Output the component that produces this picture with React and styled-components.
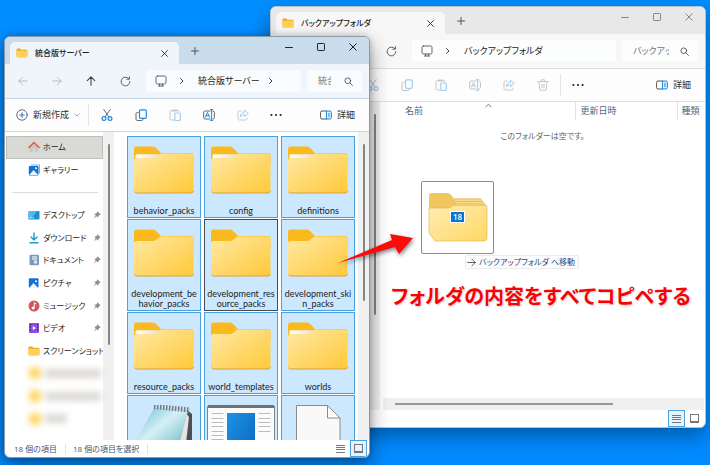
import React from "react";
import styled, { createGlobalStyle } from "styled-components";

const GlobalStyle = createGlobalStyle`
  * { box-sizing: border-box; }
  body {
    margin: 0;
    font-family: "Open Sans", "Noto Sans CJK JP", sans-serif;
    font-size: 9px;
    line-height: 12px;
    color: #222;
    font-feature-settings: "palt";
  }
  button, input {
    font: inherit;
    font-feature-settings: inherit;
    color: inherit;
    border: 0;
    padding: 0;
    background: none;
  }
  a { color: inherit; text-decoration: none; }
  svg { display: block; flex: none; }
`;

const Desktop = styled.main`
  position: relative;
  height: 100vh;
  min-height: 400px;
  overflow: hidden;
  background: linear-gradient(#008eff, #008aff);
`;

const Window = styled.section`
  position: absolute;
  inset: ${(p) => (p.$front ? "36px 340px 7px 4px" : "6px 4px 37px 270px")};
  display: flex;
  flex-direction: column;
  overflow: hidden;
  border: 1px solid ${(p) => (p.$front ? "#8a9aa8" : "#b4c2cc")};
  border-radius: 6px;
  background: #fff;
  box-shadow: ${(p) =>
    p.$front
      ? "0 8px 20px rgba(0, 0, 0, 0.4), 0 0 6px rgba(0, 0, 0, 0.2)"
      : "0 8px 20px rgba(0, 0, 0, 0.35)"};
`;

const TitleBar = styled.header`
  display: flex;
  flex: none;
  height: 27px;
  padding-left: 5px;
  background: ${(p) => (p.$front ? "#c9dcec" : "#e8e8e8")};
`;

const Tab = styled.div`
  display: flex;
  align-items: center;
  gap: 7px;
  width: 169px;
  margin-top: 5px;
  padding: 0 8px 0 6px;
  border-radius: 5px 5px 0 0;
  background: ${(p) => (p.$front ? "#eff5fb" : "#f7f7f7")};
`;

const TabTitle = styled.h1`
  flex: 1;
  margin: 0;
  font-size: 8px;
  font-weight: 500;
  white-space: nowrap;
`;

const IconButton = styled.button`
  display: flex;
  align-items: center;
  justify-content: center;
  flex: none;
  width: ${(p) => p.$width || 34}px;
  opacity: ${(p) => (p.$faded ? 0.4 : 1)};
`;

const Captions = styled.div`
  display: flex;
  height: 20px;
  margin-left: auto;
  color: ${(p) => (p.$front ? "#222" : "#888")};
`;

const NavBar = styled.nav`
  display: flex;
  flex: none;
  height: 35px;
  padding: 6px 7px 6px 1px;
  border-bottom: 1px solid ${(p) => (p.$front ? "#c3d5e4" : "#dedede")};
  background: ${(p) => (p.$front ? "#eff5fb" : "#f7f7f7")};
`;

const Address = styled.div`
  display: flex;
  align-items: center;
  flex: 1;
  min-width: 0;
  margin: 0 6px 0 4px;
  padding-left: 9px;
  border-radius: 3px;
  background: ${(p) => (p.$front ? "#f9fcfe" : "#fcfdfd")};
`;

const Crumb = styled.button`
  margin: 0 7px 0 1px;
  white-space: nowrap;
`;

const Search = styled.label`
  display: flex;
  align-items: center;
  justify-content: space-between;
  width: ${(p) => (p.$front ? "55px" : "76px")};
  padding: 0 9px 0 11px;
  border-radius: 3px;
  background: ${(p) => (p.$front ? "#f9fcfe" : "#fcfdfd")};

  input {
    width: ${(p) => (p.$front ? "13px" : "36px")};
    outline: 0;
  }
  input::placeholder { color: #777; opacity: 1; }
`;

const ToolBar = styled.div`
  display: flex;
  align-items: stretch;
  flex: none;
  height: 33px;
  border-bottom: 1px solid ${(p) => (p.$front ? "#ccd8e2" : "#e0e0e0")};
  background: #fdfdfe;
  color: #333;
`;

const NewButton = styled.button`
  display: flex;
  align-items: center;
  gap: 5px;
  width: 83px;
  padding-left: 11px;
  white-space: nowrap;
`;

const Divider = styled.span`
  width: 1px;
  margin: 5px 1px 5px 0;
  background: #e6e6e6;
`;

const DetailsButton = styled.button`
  display: flex;
  align-items: center;
  gap: 5px;
  margin-left: auto;
  padding-right: 14px;
`;

const Body = styled.div`
  display: flex;
  flex: 1;
  min-height: 0;
`;

const Sidebar = styled.ul`
  display: grid;
  grid-auto-rows: 1fr;
  width: 98px;
  margin: 0;
  padding: 4px 0 10px 1px;
  list-style: none;
  flex: none;
`;

const SideItem = styled.li`
  display: flex;
  align-items: center;
  min-width: 0;

  hr {
    flex: 1;
    margin: 0 5px 0 6px;
    border: 0;
    border-top: 1px solid #dcdcdc;
  }
`;

const SideLink = styled.a`
  display: flex;
  align-items: center;
  flex: 1;
  gap: 3px;
  height: 100%;
  padding: 0 1px 0 21px;
  border: 1px solid ${(p) => (p.$current ? "#bdbdba" : "transparent")};
  background: ${(p) => (p.$current ? "#d9d9d6" : "transparent")};
  font-size: 8px;
  white-space: nowrap;

  svg:nth-of-type(2) { margin-left: auto; }
`;

const Smudge = styled.span`
  display: flex;
  align-items: center;
  gap: 4px;
  padding-left: 23px;
  filter: blur(3px);

  &::before {
    content: "";
    width: 12px;
    height: 12px;
    border-radius: 3px;
    background: #fcd96f;
  }
  &::after {
    content: "";
    width: ${(p) => p.$width}px;
    height: 9px;
    background: #dcd9d6;
  }
`;

const Track = styled.div`
  flex: none;
  width: 11px;
  padding: 12px 4px 0 5px;
  background: #f0f0f0;
`;

const Thumb = styled.div`
  height: ${(p) => p.$length};
  border-radius: 1px;
  background: #868686;
`;

const FileGrid = styled.div`
  display: grid;
  grid-template-columns: repeat(auto-fill, 74px);
  align-content: start;
  gap: 1px 3px;
  flex: 1;
  min-width: 0;
  overflow: hidden;
  padding: 4px 2px 0 13px;
`;

const Tile = styled.button`
  display: flex;
  flex-direction: column;
  align-items: center;
  justify-content: flex-start;
  gap: 12px;
  padding: 9px 0 1px;
  border: 1px solid ${(p) => (p.$focused ? "#444b52" : "#4ba0e0")};
  background: #cce8ff;
  font-family: Lato, "Open Sans", sans-serif;
  line-height: 10px;
`;

const TileLabel = styled.span`
  display: flex;
  flex-direction: column;
  align-items: center;
`;

const Status = styled.footer`
  display: flex;
  align-items: center;
  flex: none;
  height: 17px;
  padding: 0 2px 0 9px;
  color: #45556b;
  font-size: 8px;
  line-height: 10px;

  span { padding-right: 8px; }
  span + span {
    padding-left: 7px;
    border-left: 1px solid #e3e3e3;
    border-right: 1px solid #e3e3e3;
  }
`;

const ViewButtons = styled.div`
  display: flex;
  align-self: stretch;
  margin-left: auto;
`;

const ViewButton = styled.button`
  display: flex;
  align-items: center;
  justify-content: center;
  width: 17px;
  margin-left: 1px;
  border: 1px solid ${(p) => (p.$active ? "#4ba0e0" : "transparent")};
  background: ${(p) => (p.$active ? "#e5f3fc" : "none")};
  color: #777;
`;

const Pane = styled.div`
  display: flex;
  flex-direction: column;
  flex: 1;
  min-width: 0;
`;

const FileTable = styled.table`
  width: 100%;
  table-layout: fixed;
  border-collapse: collapse;

  th {
    height: 18px;
    padding: 0 0 0 5px;
    border-right: 1px solid #e2e2e2;
    color: #56697c;
    font-weight: 400;
    text-align: left;
    white-space: nowrap;
  }
  th:first-child { width: 195px; padding-left: 25px; }
  th:nth-child(2) { width: 102px; }
  th:last-child { border-right: 0; padding-left: 4px; }
  td {
    padding: 10px 0 0;
    color: #666;
    font-size: 8px;
    text-align: center;
  }
`;

const SortHead = styled.span`
  display: flex;
  justify-content: space-between;
  padding-right: 83px;

  svg { margin-top: -3px; }
`;

const BottomTrack = styled.div`
  height: 12px;
  margin: auto 1px 0 3px;
  padding: 5px 91px 0 12px;
  background: #f0f0f0;
`;

const BottomThumb = styled.div`
  height: 2px;
  background: #959a98;
`;

const DragGhost = styled.div`
  position: absolute;
  top: 181px;
  left: 421px;
  display: flex;
  align-items: center;
  justify-content: center;
  width: 73px;
  height: 73px;
  border: 1px solid #8c8c8c;
  border-radius: 2px;
  background: #fff;
`;

const Count = styled.span`
  position: absolute;
  top: 29px;
  left: 28px;
  width: 15px;
  border: 1px solid #fff;
  background: #0a74cf;
  color: #fff;
  font-size: 8px;
  font-weight: 600;
  line-height: 10px;
  text-align: center;
`;

const DropHint = styled.div`
  position: absolute;
  top: 255px;
  left: 465px;
  display: flex;
  align-items: center;
  gap: 3px;
  height: 14px;
  padding: 0 3px 0 1px;
  border: 1px solid #ececec;
  border-radius: 2px;
  background: #fbfbfb;
  color: #2b4a80;
  font-size: 8px;
  white-space: nowrap;
`;

const Note = styled.p`
  position: absolute;
  top: 283px;
  left: 391px;
  margin: 0;
  color: #fb0007;
  font-size: 20px;
  font-weight: 700;
  line-height: 28px;
  white-space: nowrap;
  text-shadow: 1px 1px 2px rgba(0, 0, 0, 0.2);
`;

const Pointer = styled.svg`
  position: absolute;
  top: 230px;
  left: 334px;
  filter: drop-shadow(1px 2px 2px rgba(0, 0, 0, 0.5));
`;

/* ---------- icons ---------- */

const Line = ({ size = 12, box = 12, w = 1, color = "currentColor", children }) => (
  <svg width={size} height={size} viewBox={`0 0 ${box} ${box}`} fill="none" stroke={color}
    strokeWidth={w} strokeLinecap="round" strokeLinejoin="round" aria-hidden="true">
    {children}
  </svg>
);

const BackIcon = () => <Line size={10} color="#aab0b6"><path d="M11 6H1M5.500 1.500 1 6l4.500 4.500" /></Line>;
const NextIcon = () => <Line size={10} color="#aab0b6"><path d="M1 6h10M6.500 1.500 11 6l-4.500 4.500" /></Line>;
const UpIcon = () => <Line size={10} color="#444" w={1.3}><path d="M6 11V1M1.500 5.500 6 1l4.500 4.500" /></Line>;
const ReloadIcon = () => <Line size={11} color="#555"><path d="M10.800 6A4.800 4.800 0 1 1 9.500 2.700M10.300.8v2.700H7.500" /></Line>;
const MonitorIcon = () => (
  <Line color="#666"><rect x="1" y="1" width="10" height="8" rx="1.500" /><path d="M4.500 9v2M7.500 9v2M3.500 11h5" /></Line>
);
const Chevron = () => <Line size={8} box={8} color="#444"><path d="m2.500 1.500 2.500 2.500-2.500 2.500" /></Line>;
const ChevronDown = () => <Line size={6} box={8} color="#888"><path d="m1 2.500 3 3 3-3" /></Line>;
const ChevronUp = () => <Line size={7} box={8} color="#666"><path d="m1 5.500 3-3 3 3" /></Line>;
const SearchIcon = () => <Line size={9} color="#555" w={1.2}><circle cx="5" cy="5" r="3.800" /><path d="m8 8 3.300 3.300" /></Line>;
const CloseIcon = ({ size = 8 }) => <Line size={size} box={8}><path d="m.7.7 6.600 6.600M7.300.7.7 7.300" /></Line>;
const MinIcon = () => <Line size={8} box={8}><path d="M.5 4.500h7" /></Line>;
const MaxIcon = () => <Line size={8} box={8}><rect x=".5" y=".5" width="7" height="7" rx=".7" /></Line>;
const PlusIcon = () => <Line size={8} box={8} color="#555"><path d="M4 .5v7M.5 4h7" /></Line>;
const NewIcon = () => (
  <Line size={12}><circle cx="6" cy="6" r="5.200" stroke="#667" /><path d="M6 3.800v4.400M3.800 6h4.400" stroke="#1e88e0" strokeWidth="1.200" /></Line>
);
const CutIcon = () => (
  <Line>
    <path d="M2.800.6 8 8M9.200.6 4 8" stroke="#666" />
    <circle cx="3" cy="9.500" r="1.900" stroke="#1e88e0" strokeWidth="1.200" />
    <circle cx="9" cy="9.500" r="1.900" stroke="#1e88e0" strokeWidth="1.200" />
  </Line>
);
const CopyIcon = () => (
  <Line>
    <path d="M3.200 3.500H2.300A1.300 1.300 0 0 0 1 4.800v5.400a1.300 1.300 0 0 0 1.300 1.300h4.400A1.300 1.300 0 0 0 8 10.200v-.4" stroke="#666" />
    <rect x="4.500" y=".8" width="6.800" height="8.500" rx="1.300" stroke="#1e88e0" strokeWidth="1.200" />
  </Line>
);
const PasteIcon = () => (
  <Line>
    <path d="M5 11H2.300A1.300 1.300 0 0 1 1 9.700V2.800a1.300 1.300 0 0 1 1.300-1.300h6.400A1.300 1.300 0 0 1 10 2.800" stroke="#777" />
    <path d="M3.500 1.500h4" stroke="#777" strokeWidth="1.800" />
    <rect x="5.800" y="4" width="5.500" height="7.500" rx="1" stroke="#1e88e0" strokeWidth="1.200" />
  </Line>
);
const RenameIcon = () => (
  <Line>
    <path d="M7 2H2.200A1.500 1.500 0 0 0 .7 3.500v5A1.500 1.500 0 0 0 2.200 10H7M10 2a1.500 1.500 0 0 1 1.400 1.500v5A1.500 1.500 0 0 1 10 10" stroke="#666" />
    <path d="M2.500 8 4.500 3.500 6.500 8M3.200 6.700h2.600M8.600.8v10.400M7.500.6h2.200M7.500 11.400h2.200" stroke="#1e88e0" />
  </Line>
);
const ShareIcon = () => (
  <Line>
    <path d="M4 2H2.300A1.300 1.300 0 0 0 1 3.300v6.400A1.300 1.300 0 0 0 2.300 11h6.400A1.300 1.300 0 0 0 10 9.700V9" stroke="#777" />
    <path d="M7.500 1.200 11.300 4.400 7.500 7.500V5.700C5.500 5.700 4.200 6.300 3.300 8 3.500 5.200 5 3.200 7.500 3z" stroke="#1e88e0" />
  </Line>
);
const TrashIcon = () => (
  <Line color="#777"><path d="M.8 2.500h10.400M4.500 2.500V.8h3v1.700M2 2.500l.7 7.700a1.200 1.200 0 0 0 1.200 1.100h4.200a1.200 1.200 0 0 0 1.200-1.100l.7-7.700M5 5v4M7 5v4" /></Line>
);
const DotsIcon = () => (
  <svg width="12" height="4" viewBox="0 0 12 4" fill="#222"><circle cx="1.400" cy="2" r="1.100" /><circle cx="6" cy="2" r="1.100" /><circle cx="10.600" cy="2" r="1.100" /></svg>
);
const DetailsIcon = () => (
  <Line>
    <path d="M6.500 2H2A1.400 1.400 0 0 0 .6 3.400v5.200A1.400 1.400 0 0 0 2 10h4.500" stroke="#555" />
    <path d="M6.800 2H10a1.400 1.400 0 0 1 1.400 1.400v5.200A1.400 1.400 0 0 1 10 10H6.800zM9 4.500v3" stroke="#1e88e0" fill="#d7ecfb" />
  </Line>
);
const RowsIcon = () => <svg width="9" height="9" viewBox="0 0 9 9" stroke="currentColor"><path d="M0 1.500h9M0 3.500h9M0 5.500h9M0 8.500h9" /></svg>;
const LargeIcon = () => (
  <svg width="9" height="9" viewBox="0 0 9 9" fill="none" stroke="currentColor"><rect x=".5" y=".5" width="8" height="7" /><path d="M0 8.500h9" /></svg>
);
const PinIcon = () => (
  <svg width="8" height="8" viewBox="0 0 8 8"><path d="M4.500.3 7.700 3.500 6.500 4 5.300 5.200 5.200 6.700 3.500 5.300.5 7.800 2.700 4.500 1.300 2.800 2.900 2.600 4 1.500z" fill="#8c9094" /></svg>
);

const SmallFolder = () => (
  <svg width="12" height="12" viewBox="0 0 12 12">
    <path d="M.5 2.500a1 1 0 0 1 1-1h2.600l1.300 1.300h5a1 1 0 0 1 1 1V9H.5z" fill="#eda91c" />
    <rect x=".5" y="3.800" width="11" height="7" rx="1" fill="#ffd158" />
  </svg>
);
const HomeIcon = () => (
  <svg width="12" height="12" viewBox="0 0 12 12">
    <path d="M2 5.500 6 2l4 3.500V11H7.300V7.500H4.700V11H2z" fill="#c3c7ca" />
    <path d="M1 6.300 6 1.500l5 4.800" fill="none" stroke="#e8643c" strokeWidth="1.700" strokeLinecap="round" strokeLinejoin="round" />
  </svg>
);
const PictureIcon = ({ stacked }) => (
  <svg width="12" height="12" viewBox="0 0 12 12">
    {stacked && <path d="M3 1h8.500v8.500" fill="none" stroke="#64b4f0" strokeWidth="1" />}
    <rect x=".8" y={stacked ? 2 : 1.2} width="9.700" height="9.500" rx="1" fill="#1272d0" />
    <path d="M1.200 11 5.600 6l4.600 5z" fill="#e6f5ff" />
    <circle cx="8" cy="4.200" r="1" fill="#fff" />
  </svg>
);
const DesktopIcon = () => (
  <svg width="12" height="12" viewBox="0 0 12 12">
    <rect x=".5" y="2" width="11" height="8.500" rx="1" fill="#1e8fd5" />
    <path d="M.5 3a1 1 0 0 1 1-1H9L2.500 10.500h-1a1 1 0 0 1-1-1z" fill="#55b9ec" />
    <path d="M2 8.800h1.500M4.500 8.800H6" stroke="#fff" />
  </svg>
);
const DownloadIcon = () => (
  <Line color="#1f9dc9" w={1.4}><path d="M6 1v6.800M3 5l3 3 3-3M2 10.800h8" /></Line>
);
const DocumentIcon = () => (
  <svg width="12" height="12" viewBox="0 0 12 12">
    <rect x="1.500" y=".8" width="9.500" height="10.400" rx="1" fill="#7d9cbd" />
    <path d="M4 3h5M4 5h5" stroke="#fff" /><rect x="6" y="6.500" width="3" height="3" fill="#dbe7f3" />
  </svg>
);
const MusicIcon = () => (
  <svg width="12" height="12" viewBox="0 0 12 12">
    <circle cx="6" cy="6" r="5.500" fill="#d2585f" />
    <path d="M6.300 7.800V2.800l2 1" stroke="#fff" fill="none" /><circle cx="5.100" cy="7.900" r="1.500" fill="#fff" />
  </svg>
);
const VideoIcon = () => (
  <svg width="12" height="12" viewBox="0 0 12 12">
    <rect x="1" y="1" width="10" height="10" rx="1" fill="#8c4fe0" />
    <path d="M2.300 2v8M9.700 2v8" stroke="#3b1a7a" strokeDasharray="1.500 1.200" /><path d="M4.800 4v4l3.200-2z" fill="#fff" />
  </svg>
);

const Gradients = () => (
  <svg width="0" height="0" aria-hidden="true">
    <defs>
      <linearGradient id="folder" x1="0" y1="0" x2="1" y2="1">
        <stop offset="0" stopColor="#ffe9a6" /><stop offset="1" stopColor="#ffc938" />
      </linearGradient>
      <linearGradient id="sheet" x1="0" y1="0" x2="1" y2="0">
        <stop offset="0" stopColor="#fff" /><stop offset="1" stopColor="#e3e0da" />
      </linearGradient>
      <linearGradient id="pad" x1="0" y1="0" x2="1" y2="1">
        <stop offset="0" stopColor="#4fb0cf" /><stop offset=".45" stopColor="#d5f0f5" /><stop offset="1" stopColor="#46a5b4" />
      </linearGradient>
      <linearGradient id="panel" x1="0" y1="0" x2="1" y2="1">
        <stop offset="0" stopColor="#1d93e4" /><stop offset="1" stopColor="#0b62bd" />
      </linearGradient>
      <linearGradient id="stack" x1="0" y1="0" x2="1" y2="1">
        <stop offset="0" stopColor="#ffedb4" /><stop offset="1" stopColor="#ffd765" />
      </linearGradient>
    </defs>
  </svg>
);

const FolderArt = ({ filled }) => (
  <svg width="60" height="48" viewBox="0 0 60 48">
    <path d="M0 3a2.500 2.500 0 0 1 2.500-2.500H18c2 0 3.200.6 4.400 1.800L27 7h30a2.500 2.500 0 0 1 2.500 2.500V20H0z" fill="#fab91c" />
    {filled && <path d="M1.500 12V9.500A1.500 1.500 0 0 1 3 8.300H26l-4 4z" fill="url(#sheet)" />}
    <path d="M0 14.500A2.500 2.500 0 0 1 2.500 12H18c2.500 0 3.500-.6 5-2l2-1.500c.8-.7 1.500-1 2.700-1H57A2.500 2.500 0 0 1 59.500 10v34.500A2.500 2.500 0 0 1 57 47H2.500A2.500 2.500 0 0 1 0 44.500z" fill="url(#folder)" />
    <path d="M.5 45.500a2 2 0 0 0 2 1.500H57a2.500 2.500 0 0 0 2.500-2" fill="none" stroke="#d9a03a" />
  </svg>
);
const NotepadArt = () => (
  <svg width="66" height="54" viewBox="0 0 66 54">
    <path d="M56 5 61 9v47H40z" fill="#4c4f55" />
    <path d="M54 7 58 12 53 56H38z" fill="#e8e4e0" />
    <path d="M23 3 57 6 44 56H-6z" fill="url(#pad)" />
    <path d="M23 1.500 59 5" stroke="#777" strokeWidth="5" strokeDasharray="1.500 1.500" />
  </svg>
);
const PageArt = () => (
  <svg width="68" height="54" viewBox="0 0 68 54">
    <rect x=".5" y=".5" width="67" height="60" rx="1.500" fill="#fbfbfb" stroke="#7d8790" />
    <path d="M1 1.500h66" stroke="#6c747b" strokeWidth="3" />
    <rect x="20" y="8" width="28" height="50" fill="url(#panel)" />
    <path d="M4.500 8.500h12M4.500 13.500h12M4.500 17.500h12M4.500 21.500h12M4.500 26.500h12M4.500 30.500h12M4.500 34.500h12M51.500 8.500h12M51.500 13.500h12M51.500 17.500h12M51.500 21.500h12M51.500 26.500h12" stroke="#b9bdc0" />
  </svg>
);
const BlankArt = () => (
  <svg width="45" height="58" viewBox="0 0 45 58">
    <path d="M.5.500h31L44 13v50H.5z" fill="#f9f9f9" stroke="#8b8b8b" /><path d="M31.500.500V13H44z" fill="#fff" stroke="#8b8b8b" />
  </svg>
);
const StackArt = () => (
  <svg width="60" height="52" viewBox="0 0 60 52">
    <path d="M2 14 22 6.500h31l6 7.500v30l-4 5H8z" fill="#f8da86" />
    <path d="M26 7h27M26 9.500h29M27 12h30" stroke="#dcb358" strokeWidth=".7" />
    <path d="M1 3.500A2.500 2.500 0 0 1 3.500 1H19c2 0 4 1.500 5 3l4 6v8H1z" fill="#f0c65f" />
    <path d="M1 16h18c3 0 4-.8 5.500-2l1.200-.7H57a2 2 0 0 1 2 2V46a3 3 0 0 1-3 3H7L1 41z" fill="url(#stack)" stroke="#e2b95e" strokeWidth=".7" />
  </svg>
);

/* ---------- data ---------- */

const places = [
  { name: "ホーム", icon: <HomeIcon />, current: true },
  { name: "ギャラリー", icon: <PictureIcon stacked /> },
  { rule: true },
  { name: "デスクトップ", icon: <DesktopIcon />, pinned: true },
  { name: "ダウンロード", icon: <DownloadIcon />, pinned: true },
  { name: "ドキュメント", icon: <DocumentIcon />, pinned: true },
  { name: "ピクチャ", icon: <PictureIcon />, pinned: true },
  { name: "ミュージック", icon: <MusicIcon />, pinned: true },
  { name: "ビデオ", icon: <VideoIcon />, pinned: true },
  { name: "スクリーンショット", icon: <SmallFolder /> },
  { smudge: 56 },
  { smudge: 56 },
  { smudge: 22 },
];

const files = [
  { lines: ["behavior_packs"], art: <FolderArt filled /> },
  { lines: ["config"], art: <FolderArt filled /> },
  { lines: ["definitions"], art: <FolderArt filled /> },
  { lines: ["development_be", "havior_packs"], art: <FolderArt /> },
  { lines: ["development_res", "ource_packs"], art: <FolderArt />, focused: true },
  { lines: ["development_ski", "n_packs"], art: <FolderArt /> },
  { lines: ["resource_packs"], art: <FolderArt filled /> },
  { lines: ["world_templates"], art: <FolderArt /> },
  { lines: ["worlds"], art: <FolderArt filled /> },
  { lines: [], label: "メモ", art: <NotepadArt /> },
  { lines: [], label: "ページ", art: <PageArt /> },
  { lines: [], label: "ファイル", art: <BlankArt /> },
];

/* ---------- parts ---------- */

const WindowHead = ({ front, title }) => (
  <TitleBar $front={front}>
    <Tab $front={front}>
      <SmallFolder />
      <TabTitle>{title}</TabTitle>
      <IconButton $width={14} aria-label="タブを閉じる"><CloseIcon size={7} /></IconButton>
    </Tab>
    <IconButton $width={32} aria-label="新しいタブ"><PlusIcon /></IconButton>
    <Captions $front={front}>
      <IconButton $width={32} aria-label="最小化"><MinIcon /></IconButton>
      <IconButton $width={32} aria-label="最大化"><MaxIcon /></IconButton>
      <IconButton $width={32} aria-label="閉じる"><CloseIcon /></IconButton>
    </Captions>
  </TitleBar>
);

const Navigation = ({ front, title }) => (
  <NavBar $front={front}>
    <IconButton aria-label="戻る"><BackIcon /></IconButton>
    <IconButton aria-label="進む"><NextIcon /></IconButton>
    <IconButton aria-label="上へ"><UpIcon /></IconButton>
    <IconButton aria-label="更新"><ReloadIcon /></IconButton>
    <Address $front={front}>
      <MonitorIcon />
      <IconButton $width={30} aria-label="場所"><Chevron /></IconButton>
      <Crumb>{title}</Crumb>
      {front && <Chevron />}
    </Address>
    <Search $front={front}>
      <input aria-label="検索" placeholder={`${title}の検索`} />
      <SearchIcon />
    </Search>
  </NavBar>
);

const Commands = ({ front }) => (
  <ToolBar $front={front}>
    <NewButton aria-label="新規作成"><NewIcon />{front && "新規作成"}<ChevronDown /></NewButton>
    <Divider />
    <IconButton $faded={!front} aria-label="切り取り"><CutIcon /></IconButton>
    <IconButton $faded={!front} aria-label="コピー"><CopyIcon /></IconButton>
    <IconButton $faded aria-label="貼り付け"><PasteIcon /></IconButton>
    <IconButton $faded={!front} aria-label="名前の変更"><RenameIcon /></IconButton>
    <IconButton $faded aria-label="共有"><ShareIcon /></IconButton>
    {!front && <IconButton $faded aria-label="削除"><TrashIcon /></IconButton>}
    {!front && <Divider />}
    <IconButton $width={32} aria-label="その他"><DotsIcon /></IconButton>
    <DetailsButton><DetailsIcon />詳細</DetailsButton>
  </ToolBar>
);

const Places = ({ items }) => (
  <Sidebar>
    {items.map((p, i) => (
      <SideItem key={i}>
        {p.rule && <hr />}
        {p.smudge && <Smudge $width={p.smudge} />}
        {p.name && (
          <SideLink href="#" $current={p.current}>
            {p.icon}{p.name}{p.pinned && <PinIcon />}
          </SideLink>
        )}
      </SideItem>
    ))}
  </Sidebar>
);

const Views = ({ large }) => (
  <ViewButtons>
    <ViewButton $active={!large} aria-label="詳細表示"><RowsIcon /></ViewButton>
    <ViewButton $active={large} aria-label="大アイコン"><LargeIcon /></ViewButton>
  </ViewButtons>
);

export default function App() {
  return (
    <Desktop>
      <GlobalStyle />
      <Gradients />
      <Window aria-label="バックアップフォルダ">
        <WindowHead title="バックアップフォルダ" />
        <Navigation title="バックアップフォルダ" />
        <Commands />
        <Body>
          <Places items={[]} />
          <Track><Thumb $length="68%" /></Track>
          <Pane>
            <FileTable>
              <thead>
                <tr>
                  <th><SortHead>名前<ChevronUp /></SortHead></th>
                  <th>更新日時</th>
                  <th>種類</th>
                </tr>
              </thead>
              <tbody><tr><td colSpan={3}>このフォルダーは空です。</td></tr></tbody>
            </FileTable>
            <BottomTrack><BottomThumb /></BottomTrack>
          </Pane>
        </Body>
        <Status><Views /></Status>
      </Window>

      <DragGhost><StackArt /><Count>18</Count></DragGhost>
      <DropHint>
        <Line size={9} color="#333"><path d="M1 6h10M6.500 1.500 11 6l-4.500 4.500" /></Line>
        バックアップフォルダ へ移動
      </DropHint>

      <Window $front aria-label="統合版サーバー">
        <WindowHead front title="統合版サーバー" />
        <Navigation front title="統合版サーバー" />
        <Commands front />
        <Body>
          <Places items={places} />
          <Track><Thumb $length="68%" /></Track>
          <FileGrid>
            {files.map((f, i) => (
              <Tile key={i} $focused={f.focused} aria-label={f.label}>
                {f.art}
                {f.lines.length > 0 && (
                  <TileLabel>{f.lines.map((t) => <span key={t}>{t}</span>)}</TileLabel>
                )}
              </Tile>
            ))}
          </FileGrid>
          <Track><Thumb $length="53%" /></Track>
        </Body>
        <Status>
          <span>18 個の項目</span>
          <span>18 個の項目を選択</span>
          <Views large />
        </Status>
      </Window>

      <Pointer width="84" height="38" viewBox="0 0 84 38" aria-hidden="true">
        <path d="M4 33 58 10 56 4 79 8 65 24 61 17z" fill="#fd0a0a" />
      </Pointer>
      <Note>フォルダの内容をすべてコピペする</Note>
    </Desktop>
  );
}
